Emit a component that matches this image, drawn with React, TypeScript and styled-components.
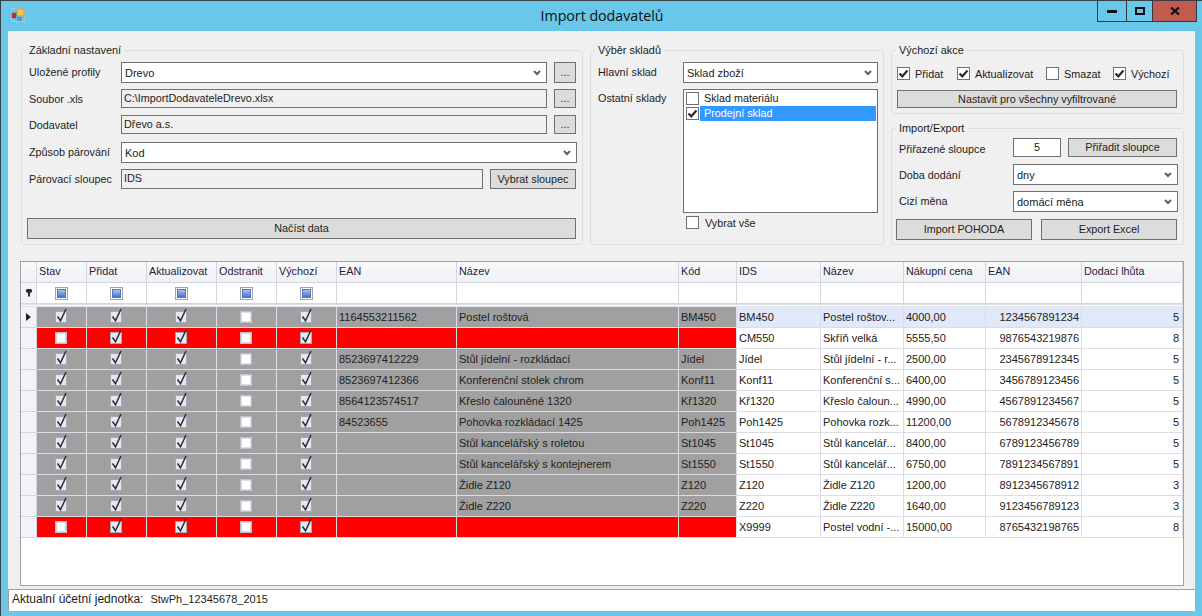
import React from "react";
import styled, { createGlobalStyle } from "styled-components";

const Global = createGlobalStyle`
  html, body { margin: 0; padding: 0; background: #69c8e9; }
  body { font-family: "Liberation Sans", Arial, sans-serif; font-size: 10.8px; color: #1c1c1c; }
  * { box-sizing: border-box; }
`;

const Window = styled.div`
  width: 1202px; height: 616px; display: flex; flex-direction: column;
  background: #69c8e9; border-top: 1px solid #3a3f44; border-left: 1px solid #3a3f44;
`;
const TitleBar = styled.div`
  height: 30px; flex: none; display: grid; grid-template-columns: 1fr auto 1fr; padding-right: 5px;
`;
const AppIcon = styled.svg`
  width: 14px; height: 14px; margin: 7px 0 0 10px; display: block;
`;
const Title = styled.div`
  font-family: "Open Sans", sans-serif; font-size: 14.2px; line-height: 30px; color: #101010;
  transform: translateX(3px);
`;
const Controls = styled.div`
  justify-self: end; display: flex; height: 21px; border: 1px solid #33383c; border-top: 0;
`;
const ControlButton = styled.div<{ $w: number; $bg?: string }>`
  width: ${(p) => p.$w}px; display: flex; align-items: center; justify-content: center;
  background: ${(p) => p.$bg || "transparent"};
  & + & { border-left: 1px solid #33383c; }
`;
const Client = styled.div`
  flex: 1; margin: 0 7px 5px 7px; background: #f0f0f0; display: flex; flex-direction: column; min-height: 0;
`;
const Panels = styled.div`
  flex: none; display: flex; gap: 7px; padding: 13px 11px 0 13px;
`;
const Group = styled.fieldset<{ $w?: number; $h?: number }>`
  margin: 0; padding: 5px 5px 5px 5px; min-width: 0;
  width: ${(p) => (p.$w ? p.$w + "px" : "auto")};
  height: ${(p) => (p.$h ? p.$h + "px" : "auto")};
  border: 1px solid #d9e0e4; border-radius: 3px; display: block;
`;
const Legend = styled.legend`
  padding: 0 3px; margin-left: -1px; font-size: 10.9px; line-height: 13px; height: 13px; color: #1c1c1c;
`;
const Column = styled.div`
  width: 293px; display: flex; flex-direction: column; gap: 8px;
`;
const Row = styled.div<{ $h: number; $top?: number; $inset?: boolean }>`
  display: flex; align-items: stretch; height: ${(p) => p.$h}px; margin-top: ${(p) => p.$top || 0}px;
  padding-right: ${(p) => (p.$inset ? 1 : 0)}px;
`;
const Label = styled.div<{ $w: number; $up?: number; $down?: number }>`
  flex: none; width: ${(p) => p.$w}px; padding-left: 2px; display: flex; align-items: center;
  padding-bottom: ${(p) => p.$up || 0}px;
  padding-top: ${(p) => p.$down || 0}px;
  white-space: nowrap;
`;
const Combo = styled.div`
  flex: 1; min-width: 0; background: #fff; border: 1px solid #707070; display: flex; align-items: center;
  justify-content: space-between; padding: 0 5px 0 3px; font-size: 11px;
`;
const ReadOnly = styled.div`
  flex: 1; min-width: 0; background: #f0f0f0; border: 1px solid #707070; display: flex; align-items: center;
  padding: 0 0 2px 2px;
`;
const NumberBox = styled.div`
  width: 48px; flex: none; background: #fff; border: 1px solid #707070; display: flex; align-items: center;
  justify-content: center; padding-bottom: 2px;
`;
const Button = styled.div<{ $w?: number; $gap?: number }>`
  ${(p) => (p.$w ? `width:${p.$w}px;flex:none;` : "flex:1;")}
  margin-left: ${(p) => p.$gap || 0}px;
  background: #dcdcdc; border: 1px solid #707070; display: flex; align-items: center; justify-content: center;
  color: #1c1c1c; padding-bottom: 1px; white-space: nowrap;
`;
const Chevron = styled.svg`
  width: 8px; height: 6px; flex: none;
`;
const Box = styled.span`
  width: 13px; height: 13px; flex: none; display: block; background: #fff; border: 1px solid #707070;
`;
const BoxTick = styled.svg`
  display: block; width: 11px; height: 11px;
`;
const CheckRow = styled.div`
  display: grid; grid-template-columns: 60px 89px 67px 1fr; height: 13px; margin-top: 5px;
`;
const CheckItem = styled.label`
  display: flex; align-items: center; gap: 5px; white-space: nowrap;
`;
const ListBox = styled.div`
  flex: 1; background: #fff; border: 1px solid #707070; padding: 1px 1px 0 2px; height: 124px;
  display: flex; flex-direction: column;
`;
const ListItem = styled.div`
  height: 15px; display: flex; align-items: center; gap: 1px;
`;
const ListText = styled.span<{ $sel?: boolean }>`
  flex: 1; height: 15px; line-height: 15px; padding-left: 4px;
  background: ${(p) => (p.$sel ? "#3399ff" : "transparent")};
  color: ${(p) => (p.$sel ? "#fff" : "#1c1c1c")};
`;
const SelectAll = styled.label`
  display: flex; align-items: center; gap: 6px; height: 13px; margin: 3px 0 0 90px;
`;
const GridBox = styled.div`
  flex: 1; min-height: 0; margin: 16px 11px 3px 12px; background: #fff; border: 1px solid #a0a0a8;
  display: flex; flex-direction: column;
`;
const COLS = "16px 50px 60px 70px 60px 60px 120px 222px 58px 84px 83px 82px 96px 101px";
const GridRow = styled.div`
  display: grid; grid-template-columns: ${COLS}; height: 21px; flex: none;
`;
const HeaderCell = styled.div`
  background: linear-gradient(#f8f9fb, #f0f1f4); border-right: 1px solid #d3d5e0; border-bottom: 1px solid #d3d5e0;
  padding: 0 0 2px 2px; display: flex; align-items: center; color: #1f2040; white-space: nowrap; overflow: hidden;
`;
const FilterCell = styled.div`
  background: #fff; border-right: 1px solid #d3d5e0; border-bottom: 1px solid #d3d5e0;
  display: flex; align-items: center; justify-content: center;
`;
const RowHead = styled.div`
  background: #f3f4f8; border-right: 1px solid #d3d5e0; border-bottom: 1px solid #d3d5e0;
  display: flex; align-items: center; justify-content: center;
`;
const Spacer = styled.div`
  height: 3px; flex: none; background: linear-gradient(#dfe0e8 0 1px, #fafafc 1px 2px, #e4e5ec 2px);
`;
const Cell = styled.div<{ $bg: string; $right?: boolean; $pr?: number }>`
  background: ${(p) => p.$bg}; border-right: 1px solid #dcdce2; border-bottom: 1px solid #dcdce2;
  display: flex; align-items: center; justify-content: ${(p) => (p.$right ? "flex-end" : "flex-start")};
  padding: 0 ${(p) => p.$pr ?? 3}px 0 2px; color: #222; white-space: nowrap; overflow: hidden; font-size: 11px;
`;
const CheckCell = styled(Cell)`
  justify-content: center; padding: 0;
`;
const FilterBox = styled.span`
  width: 13px; height: 13px; display: block; border: 1px solid #a0a2ac; padding: 1px; background: #fff;
  & > i { display: block; width: 100%; height: 100%; background: linear-gradient(#a9c3ef, #4872cf); border: 1px solid #4f74c4; }
`;
const GridCheckSvg = styled.svg`
  width: 15px; height: 17px; display: block; margin-top: -3px;
`;
const StatusBar = styled.div`
  height: 22px; flex: none; background: #fff; border-top: 1px solid #a0a0a0; border-left: 1px solid #a0a0a0;
  display: flex; align-items: center; gap: 7px; padding: 0 0 3px 3px; white-space: pre; color: #1c1c1c; font-size: 11px;
`;
const StatusLabel = styled.span`
  font-size: 12px;
`;

const ChevronIcon = () => (
  <Chevron viewBox="0 0 8 6"><path d="M1 1l3 3 3-3" fill="none" stroke="#606060" strokeWidth="2" /></Chevron>
);
const FormCheck = ({ on }: { on?: boolean }) => (
  <Box>
    {on && (
      <BoxTick viewBox="0 0 11 11">
        <path d="M1.5 5.5l2.8 2.8L9.5 2.5" fill="none" stroke="#2b2b2b" strokeWidth="2.2" />
      </BoxTick>
    )}
  </Box>
);
const GridCheck = ({ on, red }: { on?: boolean; red?: boolean }) => (
  <GridCheckSvg viewBox="0 0 15 17">
    <rect x="1.5" y="4.5" width="11" height="11" fill={on ? "#e6e7ef" : "#fff"} stroke={on ? "#a6a8b4" : "#bcc0cc"} />
    {!on && <rect x="2.5" y="5.5" width="9" height="9" fill="#fff" stroke={red ? "#d4d6e2" : "#dfe1ea"} />}
    {on && <path d="M3.5 9.5l3 4.2L12 2" fill="none" stroke="#2c2c3c" strokeWidth="1.5" />}
  </GridCheckSvg>
);

const HEADERS = ["Stav", "Přidat", "Aktualizovat", "Odstranit", "Výchozí", "EAN", "Název", "Kód", "IDS", "Název", "Nákupní cena", "EAN", "Dodací lhůta"];

type Item = { red?: boolean; ean?: string; name?: string; code?: string; ids: string; n2: string; price: string; ean2: string; days: string };
const ROWS: Item[] = [
  { ean: "1164553211562", name: "Postel roštová", code: "BM450", ids: "BM450", n2: "Postel roštov...", price: "4000,00", ean2: "1234567891234", days: "5" },
  { red: true, ids: "CM550", n2: "Skříň velká", price: "5555,50", ean2: "9876543219876", days: "8" },
  { ean: "8523697412229", name: "Stůl jídelní - rozkládací", code: "Jídel", ids: "Jídel", n2: "Stůl jídelní - r...", price: "2500,00", ean2: "2345678912345", days: "5" },
  { ean: "8523697412366", name: "Konferenční stolek chrom", code: "Konf11", ids: "Konf11", n2: "Konferenční s...", price: "6400,00", ean2: "3456789123456", days: "5" },
  { ean: "8564123574517", name: "Křeslo čalouněné 1320", code: "Kř1320", ids: "Kř1320", n2: "Křeslo čaloun...", price: "4990,00", ean2: "4567891234567", days: "5" },
  { ean: "84523655", name: "Pohovka rozkládací 1425", code: "Poh1425", ids: "Poh1425", n2: "Pohovka rozk...", price: "11200,00", ean2: "5678912345678", days: "5" },
  { name: "Stůl kancelářský s roletou", code: "St1045", ids: "St1045", n2: "Stůl kancelář...", price: "8400,00", ean2: "6789123456789", days: "5" },
  { name: "Stůl kancelářský s kontejnerem", code: "St1550", ids: "St1550", n2: "Stůl kancelář...", price: "6750,00", ean2: "7891234567891", days: "5" },
  { name: "Židle Z120", code: "Z120", ids: "Z120", n2: "Židle Z120", price: "1200,00", ean2: "8912345678912", days: "3" },
  { name: "Židle Z220", code: "Z220", ids: "Z220", n2: "Židle Z220", price: "1640,00", ean2: "9123456789123", days: "3" },
  { red: true, ids: "X9999", n2: "Postel vodní -...", price: "15000,00", ean2: "8765432198765", days: "8" },
];

export default function App() {
  return (
    <>
      <Global />
      <Window>
        <TitleBar>
          <AppIcon viewBox="0 0 14 14">
            <rect x="0.5" y="0.5" width="13" height="13" fill="none" stroke="#b8c4c8" />
            <rect x="6" y="1" width="7" height="7" fill="#f5c842" stroke="#a08a30" strokeWidth="0.6" />
            <rect x="1" y="5" width="4" height="5" fill="#c8282c" stroke="#7a5050" strokeWidth="0.6" />
            <rect x="6" y="9" width="5" height="4" fill="#5a8fd8" />
          </AppIcon>
          <Title>Import dodavatelů</Title>
          <Controls>
            <ControlButton $w={28}>
              <svg width="10" height="3"><rect width="10" height="3" fill="#111" /></svg>
            </ControlButton>
            <ControlButton $w={26}>
              <svg width="10" height="8"><rect x="1" y="1" width="8" height="6" fill="none" stroke="#111" strokeWidth="2" /></svg>
            </ControlButton>
            <ControlButton $w={44} $bg="#c25a4f">
              <svg width="10" height="8" viewBox="0 0 10 8"><path d="M1 0.5l8 7M9 0.5l-8 7" stroke="#111" strokeWidth="2.2" /></svg>
            </ControlButton>
          </Controls>
        </TitleBar>
        <Client>
          <Panels>
            <Group $w={562} $h={201}>
              <Legend>Základní nastavení</Legend>
              <Row $h={21} $inset>
                <Label $w={94} $up={1}>Uložené profily</Label>
                <Combo>Drevo<ChevronIcon /></Combo>
                <Button $w={22} $gap={7}>...</Button>
              </Row>
              <Row $h={19} $top={6} $inset>
                <Label $w={94}>Soubor .xls</Label>
                <ReadOnly>C:\ImportDodavateleDrevo.xlsx</ReadOnly>
                <Button $w={22} $gap={7}>...</Button>
              </Row>
              <Row $h={19} $top={7} $inset>
                <Label $w={94}>Dodavatel</Label>
                <ReadOnly>Dřevo a.s.</ReadOnly>
                <Button $w={22} $gap={7}>...</Button>
              </Row>
              <Row $h={21} $top={8}>
                <Label $w={94} $up={1}>Způsob párování</Label>
                <Combo>Kod<ChevronIcon /></Combo>
              </Row>
              <Row $h={20} $top={6} $inset>
                <Label $w={94} $up={1}>Párovací sloupec</Label>
                <ReadOnly>IDS</ReadOnly>
                <Button $w={86} $gap={7}>Vybrat sloupec</Button>
              </Row>
              <Row $h={21} $top={29} $inset>
                <Button>Načíst data</Button>
              </Row>
            </Group>
            <Group $w={294} $h={201}>
              <Legend>Výběr skladů</Legend>
              <Row $h={21}>
                <Label $w={87} $up={1}>Hlavní sklad</Label>
                <Combo>Sklad zboží<ChevronIcon /></Combo>
              </Row>
              <Row $h={124} $top={6}>
                <Label $w={87} $up={107}>Ostatní sklady</Label>
                <ListBox>
                  <ListItem><FormCheck /><ListText>Sklad materiálu</ListText></ListItem>
                  <ListItem><FormCheck on /><ListText $sel>Prodejní sklad</ListText></ListItem>
                </ListBox>
              </Row>
              <SelectAll><FormCheck />Vybrat vše</SelectAll>
            </Group>
            <Column>
              <Group $h={70}>
                <Legend>Výchozí akce</Legend>
                <CheckRow>
                  <CheckItem><FormCheck on />Přidat</CheckItem>
                  <CheckItem><FormCheck on />Aktualizovat</CheckItem>
                  <CheckItem><FormCheck />Smazat</CheckItem>
                  <CheckItem><FormCheck on />Výchozí</CheckItem>
                </CheckRow>
                <Row $h={18} $top={10} $inset><Button>Nastavit pro všechny vyfiltrované</Button></Row>
              </Group>
              <Group $h={123}>
                <Legend>Import/Export</Legend>
                <Row $h={19} $top={-2}>
                  <Label $w={116} $down={2}>Přiřazené sloupce</Label>
                  <NumberBox>5</NumberBox>
                  <Button $w={109} $gap={7}>Přiřadit sloupce</Button>
                </Row>
                <Row $h={21} $top={7}>
                  <Label $w={116}>Doba dodání</Label>
                  <Combo>dny<ChevronIcon /></Combo>
                </Row>
                <Row $h={21} $top={6}>
                  <Label $w={116} $up={1}>Cizí měna</Label>
                  <Combo>domácí měna<ChevronIcon /></Combo>
                </Row>
                <Row $h={21} $top={7}>
                  <Button $w={136} $gap={-1}>Import POHODA</Button>
                  <Button $w={136} $gap={9}>Export Excel</Button>
                </Row>
              </Group>
            </Column>
          </Panels>
          <GridBox>
            <GridRow>
              <HeaderCell />
              {HEADERS.map((h, i) => <HeaderCell key={i}>{h}</HeaderCell>)}
            </GridRow>
            <GridRow>
              <RowHead>
                <svg width="6" height="8" viewBox="0 0 6 8"><path d="M1 0h4l1 1v2L4 4v3L3 8 2 7V4L0 3V1z" fill="#2a2a3a" /></svg>
              </RowHead>
              {HEADERS.map((_, i) => (
                <FilterCell key={i}>{i < 5 && <FilterBox><i /></FilterBox>}</FilterCell>
              ))}
            </GridRow>
            <Spacer />
            {ROWS.map((r, idx) => {
              const bg = r.red ? "#ff0000" : "#a0a0a0";
              const hi = idx === 0 ? "#e0e8fa" : "#ffffff";
              return (
                <GridRow key={idx}>
                  <RowHead>
                    {idx === 0 && <svg width="5" height="8" viewBox="0 0 5 8"><path d="M0 0l5 4-5 4z" fill="#20202c" /></svg>}
                  </RowHead>
                  <CheckCell $bg={bg}><GridCheck on={!r.red} red={r.red} /></CheckCell>
                  <CheckCell $bg={bg}><GridCheck on /></CheckCell>
                  <CheckCell $bg={bg}><GridCheck on /></CheckCell>
                  <CheckCell $bg={bg}><GridCheck red={r.red} /></CheckCell>
                  <CheckCell $bg={bg}><GridCheck on /></CheckCell>
                  <Cell $bg={bg}>{r.ean}</Cell>
                  <Cell $bg={bg}>{r.name}</Cell>
                  <Cell $bg={bg}>{r.code}</Cell>
                  <Cell $bg={hi}>{r.ids}</Cell>
                  <Cell $bg={hi}>{r.n2}</Cell>
                  <Cell $bg={hi}>{r.price}</Cell>
                  <Cell $bg={hi} $right $pr={2}>{r.ean2}</Cell>
                  <Cell $bg={hi} $right>{r.days}</Cell>
                </GridRow>
              );
            })}
          </GridBox>
          <StatusBar><StatusLabel>Aktualní účetní jednotka:</StatusLabel>StwPh_12345678_2015</StatusBar>
        </Client>
      </Window>
    </>
  );
}
